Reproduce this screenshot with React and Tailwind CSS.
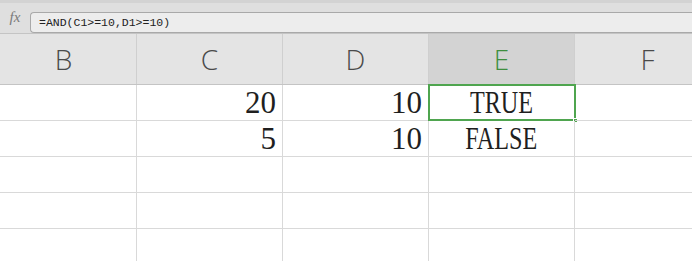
const cols = ['B', 'C', 'D', 'E', 'F'];

const rows = [
    ['', '20', '10', 'TRUE', ''],
    ['', '5', '10', 'FALSE', ''],
    ['', '', '', '', ''],
    ['', '', '', '', ''],
    ['', '', '', '', ''],
];

const Cell = ({ value, selected }) => {
    const isNum = value !== '' && !isNaN(Number(value));
    return (
        <div className={`relative h-[36px] border-r border-b border-[#d9d9d9] flex items-center ${isNum ? 'justify-end pr-[6px]' : 'justify-center'}`}>
            {isNum ? (
                <span className="text-[31px] leading-none text-[#1f1f1f]">{value}</span>
            ) : (
                <span className="inline-block text-[31px] leading-none text-[#1f1f1f] scale-x-[0.78]">{value}</span>
            )}
            {selected && (
                <div className="absolute -left-[1px] -top-[1px] w-[148px] h-[37px] border-2 border-[#4fa54f]">
                    <div className="absolute -right-[4px] -bottom-[4px] w-[5px] h-[5px] bg-[#4fa54f] border border-white" />
                </div>
            )}
        </div>
    );
};

export default function App() {
    return (
        <div className="w-[692px] h-[261px] overflow-hidden bg-white" style={{ fontFamily: '"Liberation Serif", serif' }}>
            {/* formula bar */}
            <div className="h-[33px] bg-[#dfdfdf] border-t-[3px] border-[#d3d3d3] flex items-end">
                <span className="w-[30px] pb-[5px] text-center italic text-[15px] text-[#7a7a7a]">fx</span>
                <div className="flex-1 h-[21px] bg-[#ededed] border border-r-0 border-[#a9a9a9] rounded-l-[4px] flex items-center pl-[8px]">
                    <span className="text-[11.5px] text-[#222]" style={{ fontFamily: '"Liberation Mono", monospace' }}>=AND(C1&gt;=10,D1&gt;=10)</span>
                </div>
            </div>

            <div className="ml-[-9px] w-[730px]">
                {/* column header */}
                <div className="grid grid-cols-5 h-[52px] bg-[#e4e4e4] border-t border-b border-[#c4c4c4]">
                    {cols.map((c) => (
                        <div
                            key={c}
                            className={`flex items-center justify-center border-r border-[#cfcfcf] text-[28px] font-light ${c === 'E' ? 'bg-[#d3d3d3] text-[#3e8e3e]' : 'text-[#4a4a4a]'}`}
                            style={{ fontFamily: '"Open Sans", "Liberation Sans", sans-serif' }}
                        >
                            {c}
                        </div>
                    ))}
                </div>

                {/* cells */}
                {rows.map((r, ri) => (
                    <div key={ri} className="grid grid-cols-5">
                        {r.map((v, ci) => (
                            <Cell key={ci} value={v} selected={ri === 0 && ci === 3} />
                        ))}
                    </div>
                ))}
            </div>
        </div>
    );
}
